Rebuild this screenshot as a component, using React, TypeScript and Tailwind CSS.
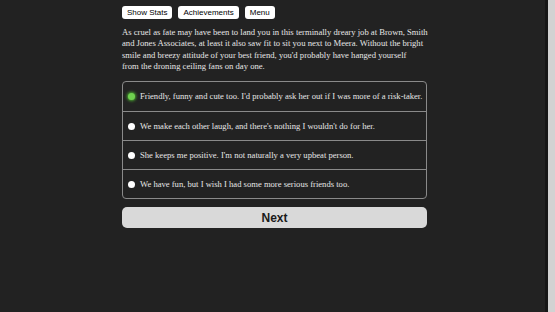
import React, { useState } from 'react'

const options = [
  "Friendly, funny and cute too. I'd probably ask her out if I was more of a risk-taker.",
  "We make each other laugh, and there's nothing I wouldn't do for her.",
  "She keeps me positive. I'm not naturally a very upbeat person.",
  'We have fun, but I wish I had some more serious friends too.',
]

const App: React.FC = () => {
  const [picked, setPicked] = useState(0)

  return (
    <div className="flex h-screen bg-[#222222]">
      <div className="flex-1 overflow-hidden pl-[4px]">
        <div className="mx-auto w-[305px] pt-[6px]">
          {/* top menu */}
          <div className="flex gap-[6px] font-['Liberation_Sans',Arial,sans-serif] text-[8px] text-black">
            <button className="h-[13px] rounded-[3px] bg-white px-[5px] leading-[13px]">Show Stats</button>
            <button className="h-[13px] rounded-[3px] bg-white px-[5px] leading-[13px]">Achievements</button>
            <button className="h-[13px] rounded-[3px] bg-white px-[5px] leading-[13px]">Menu</button>
          </div>

          <p className="mt-[8px] whitespace-nowrap font-['Liberation_Serif','Times_New_Roman',serif] text-[8.65px] leading-[11.3px] text-[#e6e6e6]">
            As cruel as fate may have been to land you in this terminally dreary job at Brown, Smith
            <br />
            and Jones Associates, at least it also saw fit to sit you next to Meera. Without the bright
            <br />
            smile and breezy attitude of your best friend, you'd probably have hanged yourself
            <br />
            from the droning ceiling fans on day one.
          </p>

          {/* choices */}
          <div className="mt-[9px] overflow-hidden rounded-[4px] border border-[#8a8a8a]">
            {options.map((text, i) => (
              <label
                key={i}
                onClick={() => setPicked(i)}
                className={`flex h-[29px] cursor-pointer items-center gap-[5px] whitespace-nowrap pl-[5px] font-['Liberation_Serif','Times_New_Roman',serif] text-[8.6px] text-[#e6e6e6] ${
                  i > 0 ? 'border-t border-[#8a8a8a]' : ''
                }`}
              >
                <span
                  className={`h-[7px] w-[7px] shrink-0 rounded-full ${
                    picked === i ? 'bg-[#6fd14f] shadow-[0_0_3px_1px_#4caf30]' : 'bg-white'
                  }`}
                />
                {text}
              </label>
            ))}
          </div>

          <button className="mt-[8px] h-[21px] w-full rounded-[5px] bg-[#d9d9d9] font-['Liberation_Sans',Arial,sans-serif] text-[12px] font-bold text-[#1a1a1a]">
            Next
          </button>
        </div>
      </div>
      {/* scrollbar track */}
      <div className="w-[10px] shrink-0 border-l-[3px] border-[#161616] bg-[#d2d2d2]" />
    </div>
  )
}

export default App
